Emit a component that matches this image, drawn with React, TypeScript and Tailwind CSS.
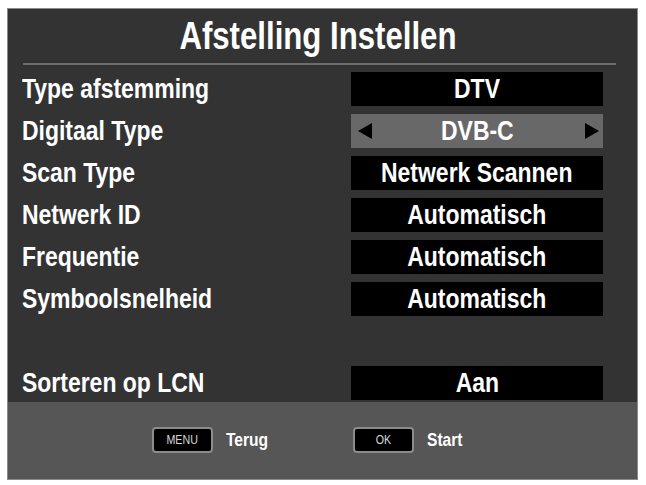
import React from 'react';

const rows: { label: string; value: string; active?: boolean }[] = [
  { label: 'Type afstemming', value: 'DTV' },
  { label: 'Digitaal Type', value: 'DVB-C', active: true },
  { label: 'Scan Type', value: 'Netwerk Scannen' },
  { label: 'Netwerk ID', value: 'Automatisch' },
  { label: 'Frequentie', value: 'Automatisch' },
  { label: 'Symboolsnelheid', value: 'Automatisch' },
];

// condensed look: Liberation Sans squeezed horizontally
const FONT = "font-['Liberation_Sans',Arial,sans-serif]";
const NARROW = 'inline-block scale-x-[0.82] whitespace-nowrap';

function Row({ label, value, active }: { label: string; value: string; active?: boolean }) {
  return (
    <div className="flex h-[34px] items-center">
      <div className="w-[329px] text-[28px] font-bold leading-none text-white">
        <span className={`${NARROW} origin-left`}>{label}</span>
      </div>
      <div
        className={`relative flex h-[34px] w-[252px] items-center justify-center text-[28px] font-bold leading-none text-white ${
          active ? 'bg-[#686868]' : 'bg-black'
        }`}
      >
        {active && (
          <svg className="absolute left-[7px] top-[9px]" width="14" height="16" viewBox="0 0 14 16">
            <polygon points="14,0 14,16 0,8" fill="#000" />
          </svg>
        )}
        <span className={`${NARROW} origin-center`}>{value}</span>
        {active && (
          <svg className="absolute right-[4px] top-[9px]" width="14" height="16" viewBox="0 0 14 16">
            <polygon points="0,0 0,16 14,8" fill="#000" />
          </svg>
        )}
      </div>
    </div>
  );
}

function Key({ label }: { label: string }) {
  return (
    <div className="flex h-[26px] w-[61px] items-center justify-center rounded-[4px] border-2 border-[#8c8c8c] bg-black text-[13px] font-normal leading-none text-[#d8d8d8]">
      <span className={`${NARROW} origin-center`}>{label}</span>
    </div>
  );
}

export default function App() {
  return (
    <div className={`min-h-[485px] w-[646px] bg-white pl-[7px] pt-[8px] ${FONT}`}>
      <div className="flex h-[472px] w-[631px] flex-col border border-[#8a8a8a] bg-[#333333]">
        <div className="flex h-[54px] items-center justify-center pr-[10px] text-[38px] font-bold leading-none text-white">
          <span className={`${NARROW} origin-center`}>Afstelling Instellen</span>
        </div>
        <div className="ml-[15px] mr-[21px] h-[2px] bg-[#6c6c6c]" />
        <div className="flex flex-col gap-[8px] pl-[14px] pt-[7px]">
          {rows.map((r) => (
            <Row key={r.label} {...r} />
          ))}
          <div className="h-[34px]" />
          <Row label="Sorteren op LCN" value="Aan" />
        </div>
        <div className="mt-[2px] flex flex-1 items-center bg-[#565656] pb-[2px] pl-[144px]">
          <div className="flex w-[201px] items-center gap-[13px]">
            <Key label="MENU" />
            <span className="text-[19px] font-bold leading-none text-white">
              <span className={`${NARROW} origin-left`}>Terug</span>
            </span>
          </div>
          <div className="flex items-center gap-[13px]">
            <Key label="OK" />
            <span className="text-[19px] font-bold leading-none text-white">
              <span className={`${NARROW} origin-left`}>Start</span>
            </span>
          </div>
        </div>
      </div>
    </div>
  );
}
